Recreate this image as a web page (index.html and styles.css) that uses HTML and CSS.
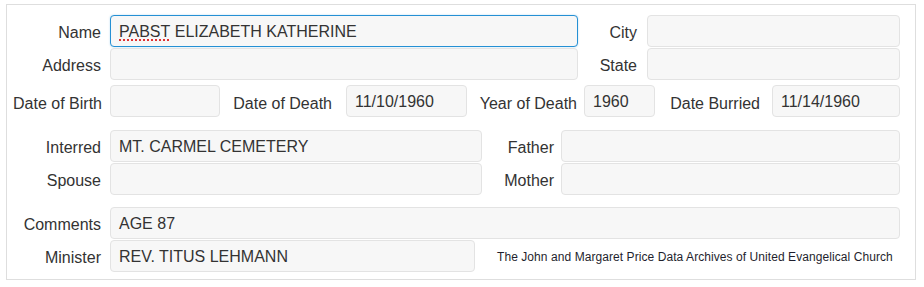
FILE: index.html
```html
<!DOCTYPE html>
<html lang="en">
<head>
    <meta charset="UTF-8">
    <title>Burial Record</title>
    <link rel="stylesheet" href="styles.css">
</head>
<body>
    <div class="record">
        <!-- Name / place -->
        <div class="group">
            <div class="row">
                <label class="lbl">Name</label>
                <div class="field focus w-name"><span class="misspelled">PABST</span>&nbsp;ELIZABETH KATHERINE</div>
                <label class="lbl lbl-city">City</label>
                <div class="field w-city"></div>
            </div>
            <div class="row">
                <label class="lbl">Address</label>
                <div class="field w-name"></div>
                <label class="lbl lbl-city">State</label>
                <div class="field w-city"></div>
            </div>
        </div>

        <!-- Dates -->
        <div class="group g-dates">
            <div class="row">
                <label class="lbl lbl-birth">Date of Birth</label>
                <div class="field w-birth"></div>
                <label class="lbl lbl-death">Date of Death</label>
                <div class="field w-death">11/10/1960</div>
                <label class="lbl lbl-year">Year of Death</label>
                <div class="field w-year">1960</div>
                <label class="lbl lbl-buried">Date Burried</label>
                <div class="field w-buried">11/14/1960</div>
            </div>
        </div>

        <!-- Family -->
        <div class="group g-family">
            <div class="row">
                <label class="lbl">Interred</label>
                <div class="field w-half">MT. CARMEL CEMETERY</div>
                <label class="lbl lbl-parent">Father</label>
                <div class="field w-parent"></div>
            </div>
            <div class="row">
                <label class="lbl">Spouse</label>
                <div class="field w-half"></div>
                <label class="lbl lbl-parent">Mother</label>
                <div class="field w-parent"></div>
            </div>
        </div>

        <!-- Notes -->
        <div class="group g-notes">
            <div class="row">
                <label class="lbl">Comments</label>
                <div class="field w-full">AGE 87</div>
            </div>
            <div class="row">
                <label class="lbl">Minister</label>
                <div class="field w-minister">REV. TITUS LEHMANN</div>
                <p class="credit">The John and Margaret Price Data Archives of United Evangelical Church</p>
            </div>
        </div>
    </div>
</body>
</html>
```

FILE: styles.css
```css
* {
    margin: 0;
    padding: 0;
    box-sizing: border-box;
}

body {
    font-family: 'Liberation Sans', Arial, sans-serif;
    font-size: 16px;
    color: #333;
    background-color: #fff;
}

.record {
    margin: 4px 0 0 6px;
    width: 910px;
    height: 276px;
    border: 1px solid #dedede;
    padding: 10px 14px 6px 0;
}

.group {
    display: flex;
    flex-direction: column;
    gap: 1px;
}

.g-dates {
    margin-top: 5px;
}

.g-family {
    margin-top: 13px;
}

.g-notes {
    margin-top: 12px;
}

.row {
    display: flex;
    align-items: center;
    height: 32px;
}

.lbl {
    flex: none;
    width: 103px;
    padding-top: 3px;
    padding-right: 9px;
    text-align: right;
    white-space: nowrap;
    color: #333;
}

.g-dates .lbl {
    padding-top: 5px;
}

.field {
    flex: none;
    height: 32px;
    line-height: 30px;
    padding: 1px 8px 0 8px;
    border: 1px solid #e3e3e3;
    border-radius: 4px;
    background-color: #f7f7f7;
    color: #333;
    white-space: nowrap;
    overflow: hidden;
}

.field.focus {
    border-color: #2590d4;
    box-shadow: 0 0 2px rgba(37, 144, 212, 0.35);
}

.misspelled {
    text-decoration: underline dotted #d00;
    text-underline-offset: 3px;
}

/* column widths */
.w-name { width: 468px; }
.w-city { width: 253px; }
.lbl-city { width: 69px; padding-right: 10px; }

.lbl-birth { padding-right: 8px; }
.w-birth { width: 110px; }
.lbl-death { width: 126px; padding-right: 14px; }
.w-death { width: 121px; }
.lbl-year { width: 117px; padding-right: 7px; }
.w-year { width: 71px; }
.lbl-buried { width: 117px; padding-right: 12px; }
.w-buried { width: 128px; }

.w-half { width: 372px; }
.lbl-parent { width: 79px; padding-right: 7px; }
.w-parent { width: 339px; }

.w-full { width: 790px; }
.w-minister { width: 365px; }

.credit {
    margin-left: 22px;
    padding-top: 2px;
    font-size: 12px;
    letter-spacing: 0.07px;
    color: #1f1f2e;
    white-space: nowrap;
}
```
